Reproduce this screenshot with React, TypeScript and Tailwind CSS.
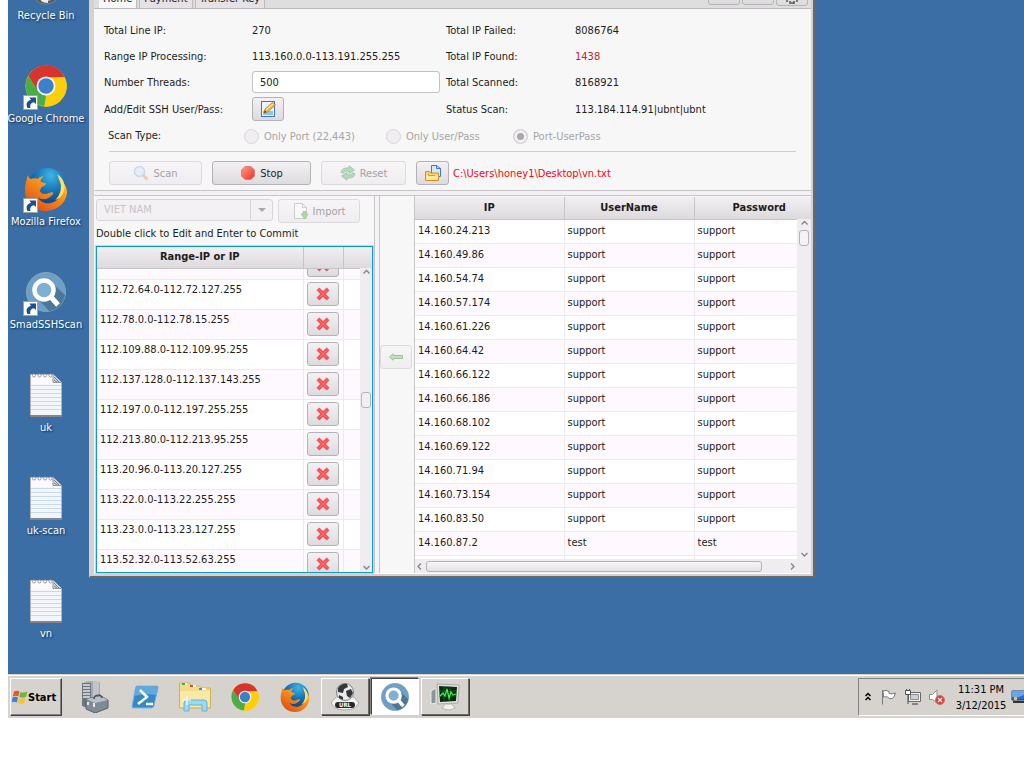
import React, { ReactNode, useState } from "react";

const ranges = [
  "112.72.64.0-112.72.127.255",
  "112.78.0.0-112.78.15.255",
  "112.109.88.0-112.109.95.255",
  "112.137.128.0-112.137.143.255",
  "112.197.0.0-112.197.255.255",
  "112.213.80.0-112.213.95.255",
  "113.20.96.0-113.20.127.255",
  "113.22.0.0-113.22.255.255",
  "113.23.0.0-113.23.127.255",
  "113.52.32.0-113.52.63.255",
];

const results = [
  ["14.160.24.213", "support", "support"],
  ["14.160.49.86", "support", "support"],
  ["14.160.54.74", "support", "support"],
  ["14.160.57.174", "support", "support"],
  ["14.160.61.226", "support", "support"],
  ["14.160.64.42", "support", "support"],
  ["14.160.66.122", "support", "support"],
  ["14.160.66.186", "support", "support"],
  ["14.160.68.102", "support", "support"],
  ["14.160.69.122", "support", "support"],
  ["14.160.71.94", "support", "support"],
  ["14.160.73.154", "support", "support"],
  ["14.160.83.50", "support", "support"],
  ["14.160.87.2", "test", "test"],
];

/* ---------- icons ---------- */

function Chrome({ className }: { className: string }) {
  return (
    <svg viewBox="0 0 48 48" className={className} aria-hidden="true">
      <circle cx="24" cy="24" r="23.5" fill="#fbcf0d" />
      <path d="M3.700 12.200A23.500 23.500 0 0 1 45.400 14H24L14 29Z" fill="#d9342b" />
      <path d="M3.700 12.200 14.600 29.500 24 35l-2 12A23.500 23.500 0 0 1 3.700 12.200Z" fill="#4aae48" />
      <path d="M21.500 47.400 33.500 29 34 14h11.400a23.500 23.500 0 0 1-23.900 33.400Z" fill="#fbcf0d" />
      <circle cx="24" cy="24" r="10.8" fill="#f4f6f8" />
      <circle cx="24" cy="24" r="8.8" fill="#3c7fcb" />
    </svg>
  );
}

function Firefox({ className }: { className: string }) {
  return (
    <svg viewBox="0 0 48 48" className={className} aria-hidden="true">
      <defs>
        <radialGradient id="ffGlobe" cx="0.6" cy="0.2" r="0.8">
          <stop offset="0" stopColor="#3fb4e8" />
          <stop offset="0.5" stopColor="#1673b8" />
          <stop offset="1" stopColor="#123a78" />
        </radialGradient>
        <linearGradient id="ffFox" x1="1" y1="0" x2="0.2" y2="1">
          <stop offset="0" stopColor="#ffe44d" />
          <stop offset="0.4" stopColor="#f8991d" />
          <stop offset="1" stopColor="#dc4b16" />
        </linearGradient>
      </defs>
      <circle cx="25" cy="22" r="21" fill="url(#ffGlobe)" />
      <path
        d="M4 9c1 2 2 3 3 4 3-1 6-1 8 0 2-2 4-3 6-3-2 2-3 4-3 6 2 1 5 1 6 2 0 2-3 3-5 4-1 2-1 3-2 4 2 4 6 4 9 3 2-1 4-2 6-1 0 2-3 4-6 6-4 2-8 1-11-1 3 5 9 8 15 6 8-2 12-9 11-18-1-4-3-7-4-11 6 5 10 12 10 18A23 23 0 0 1 24 48C11 48 1 38 1 25 1 19 3 14 4 9Z"
        fill="url(#ffFox)"
      />
      <path d="M36 8c3 5 5 10 4 17-1 5-3 8-6 11 8-3 11-10 10-17-1-5-4-9-8-11Z" fill="#ffe066" />
    </svg>
  );
}

function SmadScan({ className }: { className: string }) {
  return (
    <svg viewBox="0 0 40 40" className={className} aria-hidden="true">
      <circle cx="20" cy="20" r="19.5" fill="#6f9fc4" stroke="#7fa6bd" />
      <path d="M26 11 39 23a19 19 0 0 1-16 16L14 29Z" fill="#4d7796" />
      <circle cx="18" cy="18" r="9.5" fill="#7fb0d4" stroke="#fff" strokeWidth="4.5" />
      <path d="m25 25 7 8" stroke="#fff" strokeWidth="5" />
    </svg>
  );
}

function Notepad() {
  return (
    <svg viewBox="0 0 32 44" className="h-11 w-8" aria-hidden="true">
      <path d="M.5 1.5H23l8.500 8v34H.5Z" fill="#fbfaff" stroke="#b3b4bb" />
      <path d="M1 11h30v32H1Z" fill="#f3f5fb" />
      <path d="M1 12.500h30M1 16.500h30M1 20.500h30M1 24.500h30M1 28.500h30M1 32.500h30M1 36.500h30" stroke="#c5d9ec" />
      <path d="M0 43h32" stroke="#85868c" strokeWidth="2" />
      <path d="M23 1.500v8h8.500" fill="#dadbe0" stroke="#94959c" />
      <path d="m24 4 5 5M24 7l3 2" stroke="#77787e" />
      <g fill="#fff" stroke="#9a9ba2">
        <circle cx="4" cy="2.500" r="1.5" />
        <circle cx="9.500" cy="2.500" r="1.5" />
        <circle cx="15" cy="2.500" r="1.5" />
        <circle cx="20.500" cy="2.500" r="1.5" />
      </g>
    </svg>
  );
}

function RecycleBin() {
  return (
    <svg viewBox="0 0 32 44" className="h-11 w-8" aria-hidden="true">
      <path d="M2 2h28l-5 38q-9 6-18 0Z" fill="#c9cbcd" stroke="#8f9194" />
      <path d="M7 37q9 6 18 0v3q-9 6-18 0Z" fill="#5b5d60" />
      <path d="M11 35h7v7q-4 0-7-2Z" fill="#eceded" />
    </svg>
  );
}

function Shortcut() {
  return (
    <svg viewBox="0 0 15 15" className="absolute bottom-0 left-0 size-[15px]" aria-hidden="true">
      <rect x=".5" y=".5" width="14" height="14" fill="#fdfcf6" stroke="#a5a396" />
      <path d="M4.500 13C2.500 9 4 5.500 8 5L6.500 2.500H13V9l-2-1.800C8 7.500 6.500 10 7.500 13Z" fill="#1d4f95" />
    </svg>
  );
}

function EditIcon() {
  return (
    <svg viewBox="0 0 16 16" className="size-4" aria-hidden="true">
      <rect x="1.500" y=".5" width="13" height="15" fill="#eaf5ff" stroke="#3d76c8" />
      <path d="M3 10h10v4H3Z" fill="#8fc4f2" />
      <path d="m4 12 1-4 7.500-6.500 3 2.500-8 7Z" fill="#f3b43c" stroke="#b9761a" strokeWidth=".8" />
      <path d="m6 9 7-6" stroke="#ffe79a" strokeWidth="1.200" />
      <path d="m4 12 .8-2.500L6.500 11Z" fill="#4a3a2a" />
    </svg>
  );
}

function SearchIcon() {
  return (
    <svg viewBox="0 0 16 16" className="size-4 opacity-40" aria-hidden="true">
      <path d="m9.500 9.500 5 5" stroke="#e29a4d" strokeWidth="3" />
      <circle cx="6.500" cy="6.500" r="5" fill="#cfe8ff" stroke="#8ab4e0" strokeWidth="1.500" />
    </svg>
  );
}

function StopIcon() {
  return (
    <svg viewBox="0 0 16 16" className="size-4" aria-hidden="true">
      <defs>
        <linearGradient id="stopRed" x1="0" y1="0" x2="1" y2="1">
          <stop offset="0" stopColor="#ff9a86" />
          <stop offset="1" stopColor="#ef2f24" />
        </linearGradient>
      </defs>
      <path d="M5 1.500h6L14.500 5v6L11 14.500H5L1.500 11V5Z" fill="url(#stopRed)" stroke="#dd8078" />
    </svg>
  );
}

function ResetIcon() {
  return (
    <svg viewBox="0 0 16 16" className="size-4 opacity-50" aria-hidden="true">
      <path d="M1 7.500C1 4.500 4 2.500 9 3V.8L14.500 5 9 8.500V6.300C5 5.800 4 6.500 4 8Z" fill="#7cc47c" stroke="#3f9a50" strokeWidth=".8" />
      <path d="M15 8.500c0 3-3 5-8 4.500v2.200L1.500 11 7 7.500v2.200c4 .5 5-.2 5-1.700Z" fill="#7cc47c" stroke="#3f9a50" strokeWidth=".8" />
    </svg>
  );
}

function FolderIcon() {
  return (
    <svg viewBox="0 0 16 16" className="size-4" aria-hidden="true">
      <path d="M6.500.5h5l4 3v8h-9Z" fill="#d6e8fd" stroke="#4178cf" />
      <path d="M11.500.5v3h4" fill="none" stroke="#4178cf" />
      <path d="M.5 6.500h4l1 1.500h8v7.500H.5Z" fill="#fbd46c" stroke="#d98e1c" />
      <path d="M1 10.500h12v4.500H1Z" fill="#ffe9a0" />
      <path d="M3.500 8.500v2H10" fill="none" stroke="#e0992c" />
    </svg>
  );
}

function ImportIcon() {
  return (
    <svg viewBox="0 0 16 16" className="size-4 opacity-50" aria-hidden="true">
      <path d="M1.500.5h8l4 4v11h-12Z" fill="#fff" stroke="#a9a9ad" />
      <path d="M9.500.5v4h4" fill="none" stroke="#a9a9ad" />
      <path d="M10 8.500h3V11h2l-3.500 4.500L8 11h2Z" fill="#6fbf5f" stroke="#4a9a45" strokeWidth=".8" />
    </svg>
  );
}

function CrossIcon() {
  return (
    <svg viewBox="0 0 14 14" className="size-3.5" aria-hidden="true">
      <path
        d="M3.300 1 7 4.600 10.700 1 13 3.300 9.400 7l3.600 3.700-2.300 2.300L7 9.400 3.300 13 1 10.700 4.600 7 1 3.300Z"
        fill="#fb5155"
        stroke="#e2474c"
        strokeWidth=".8"
      />
      <path d="m3.500 3.500 7 7m0-7-7 7" stroke="#ff7a7c" strokeWidth=".8" />
    </svg>
  );
}

function Chevron({ dir, className = "" }: { dir: "up" | "down" | "left" | "right"; className?: string }) {
  const d = {
    up: "m1.500 5.500 3-3 3 3",
    down: "m1.500 3 3 3 3-3",
    left: "m6 1.500-3 3 3 3",
    right: "m3 1.500 3 3-3 3",
  }[dir];
  return (
    <svg viewBox="0 0 9 9" className={`size-[9px] ${className}`} aria-hidden="true">
      <path d={d} fill="none" stroke="#858385" strokeWidth="1.300" />
    </svg>
  );
}

/* ---------- controls ---------- */

function Btn({ children, className = "", disabled = false, label }: { children?: ReactNode; className?: string; disabled?: boolean; label?: string }) {
  return (
    <button
      type="button"
      disabled={disabled}
      aria-label={label}
      className={`flex h-6 shrink-0 items-center justify-center gap-1 rounded-[3px] border bg-linear-to-b ${
        disabled ? "border-[#dddadd] from-[#f8f5f8] to-[#f0edf0] text-[#a3a1a3]" : "border-[#b4b2b4] from-[#f3f1f3] to-[#dddbdd] text-[#1c1c1c]"
      } ${className}`}
    >
      {children}
    </button>
  );
}

function Caption({ children }: { children: ReactNode }) {
  return <span className="pt-0.5">{children}</span>;
}

function ScanType({ label, checked = false, className = "" }: { label: string; checked?: boolean; className?: string }) {
  return (
    <label className={`flex items-center gap-[5px] text-[#a6a4a6] ${className}`}>
      <input
        type="radio"
        name="scanType"
        disabled
        defaultChecked={checked}
        className="size-[15px] shrink-0 appearance-none rounded-full border border-[#d8d5d8] bg-[#f1eef1] checked:bg-[#a9a9a9] checked:shadow-[inset_0_0_0_3px_#f3f1f3]"
      />
      <Caption>{label}</Caption>
    </label>
  );
}

function DesktopItem({ label, children, shortcut = false }: { label: string; children: ReactNode; shortcut?: boolean }) {
  return (
    <a href="#" className="flex h-[103px] flex-col items-center justify-end">
      <span className="relative flex h-12 w-[46px] items-center justify-center">
        {children}
        {shortcut && <Shortcut />}
      </span>
      <span className="mt-px text-[11px] leading-4 whitespace-nowrap text-white [text-shadow:1px_1px_2px_#0b2648]">{label}</span>
    </a>
  );
}

function TaskButton({ label, children, state = "flat" }: { label: string; children: ReactNode; state?: "flat" | "raised" | "active" }) {
  const looks = {
    flat: "border-transparent",
    raised: "border-t-white border-l-white border-r-[#6b6963] border-b-[#6b6963] shadow-[1px_1px_0_#404040]",
    active: "border-t-[#404040] border-l-[#404040] border-r-white border-b-white bg-white shadow-[-1px_-1px_0_#848284]",
  }[state];
  return (
    <button type="button" aria-label={label} className={`flex h-[37px] w-12 shrink-0 items-center justify-center border ${looks}`}>
      {children}
    </button>
  );
}

/* ---------- window ---------- */

function Field({ label, value, valueClass = "" }: { label: string; value: string; valueClass?: string }) {
  return (
    <>
      <Caption>{label}</Caption>
      <span className={`pt-0.5 ${valueClass}`}>{value}</span>
    </>
  );
}

function RangeTable() {
  const th = "h-[21px] border-b border-[#c8c5c8] bg-linear-to-b from-[#f1eff1] to-[#dcdadc] p-0 font-bold";
  return (
    <div className="relative h-[327px] overflow-hidden border border-[#0f9bcb] bg-white shadow-[0_0_0_1px_#b5dceb]">
      <table className="w-full table-fixed border-collapse">
        <thead>
          <tr>
            <th className={`${th} w-[206px] border-r`}>Range-IP or IP</th>
            <th className={`${th} w-10 border-r`} aria-label="Delete" />
            <th className={th} aria-label="Scroll" />
          </tr>
        </thead>
        <tbody>
          <tr className="border-b border-[#eceaec] bg-[#fef9fe]">
            <td className="h-[11px] border-r border-[#eceaec] p-0" />
            <td className="border-r border-[#eceaec] p-0">
              <div className="flex h-2.5 items-end justify-center overflow-hidden pb-0.5">
                <Btn className="w-8" label="Delete previous range">
                  <CrossIcon />
                </Btn>
              </div>
            </td>
            <td />
          </tr>
          {ranges.map((r, i) => (
            <tr key={r} className={`border-b border-[#eceaec] ${i % 2 ? "bg-[#fef9fe]" : "bg-white"}`}>
              <td className="h-[30px] border-r border-[#eceaec] p-0 pt-0.5 pl-[3px] align-top">{r}</td>
              <td className="border-r border-[#eceaec] p-0">
                <div className="flex justify-center">
                  <Btn className="w-8" label={`Delete ${r}`}>
                    <CrossIcon />
                  </Btn>
                </div>
              </td>
              <td />
            </tr>
          ))}
        </tbody>
      </table>
      <div className="absolute top-[21px] right-0 bottom-0 flex w-3 flex-col items-center justify-between bg-[#efedef]">
        <Chevron dir="up" />
        <div className="mt-16 h-4 w-2.5 rounded-[3px] border border-[#b4b2b4] bg-[#f1eff1]" />
        <Chevron dir="down" className="mt-26" />
      </div>
    </div>
  );
}

function ResultTable() {
  const th = "h-[22px] border-b border-[#c8c5c8] bg-linear-to-b from-[#f1eff1] to-[#dcdadc] p-0 font-bold";
  const td = "h-6 border-r border-[#eceaec] p-0 pl-[3px]";
  return (
    <div className="flex min-w-0 flex-1 flex-col border-l border-[#c8c5c8] pt-px">
      <div className="relative h-[362px] overflow-hidden bg-white">
        <table className="w-[409px] table-fixed border-collapse">
          <thead>
            <tr>
              <th className={`${th} w-[149px] border-r`}>IP</th>
              <th className={`${th} w-[130px] border-r`}>UserName</th>
              <th className={`${th} w-[130px]`}>Password</th>
            </tr>
          </thead>
          <tbody>
            {results.map(([ip, user, pass], i) => (
              <tr key={ip} className={`border-b border-[#eceaec] ${i % 2 ? "bg-[#fef9fe]" : "bg-white"}`}>
                <td className={td}>{ip}</td>
                <td className={td}>{user}</td>
                <td className={td}>{pass}</td>
              </tr>
            ))}
            <tr>
              <td className={td} />
              <td className={td} />
              <td className={td} />
            </tr>
          </tbody>
        </table>
        <div className="absolute top-[22px] right-0 bottom-0 flex w-3.5 flex-col items-center bg-[#efedef]">
          <Chevron dir="up" />
          <div className="mt-0.5 h-4 w-2.5 rounded-[3px] border border-[#b4b2b4] bg-[#f4f2f4]" />
          <Chevron dir="down" className="mt-auto" />
        </div>
      </div>
      <div className="flex h-3.5 items-center bg-[#efedef] pr-3.5">
        <Chevron dir="left" />
        <div className="ml-0.5 h-[11px] w-[336px] rounded-[3px] border border-[#b4b2b4] bg-linear-to-b from-[#f8f6f8] to-[#e4e2e4]" />
        <Chevron dir="right" className="ml-auto" />
      </div>
    </div>
  );
}

function ScannerWindow() {
  const [threads, setThreads] = useState("500");
  const grid = "grid grid-cols-[148px_194px_129px_1fr] items-center";
  const tab = "h-5 border-[#bcbabc] px-1 pt-[3px]";
  return (
    <section
      aria-label="Scanner"
      className="absolute top-0 left-[81px] w-[726px] border-r-2 border-b-2 border-l border-r-[#6b6964] border-b-[#6b6964] border-l-[#d6d3ce] text-[11px] leading-4 text-[#1c1c1c]"
    >
      <div className="border-r-2 border-b-2 border-l-4 border-[#d4d1d0]">
        <div className="bg-[#f7f7f7]">
          <div className="flex h-[9px] items-end overflow-hidden border-b border-[#bcbabc] bg-[#dfdedf] pr-[3px] pl-[5px]">
            <nav className="flex items-end gap-0.5">
              <a href="#home" className={`${tab} border-r bg-[#f7f7f7]`}>Home</a>
              <a href="#payment" className={`${tab} border-x bg-[#e4e2e4]`}>Payment</a>
              <a href="#key" className={`${tab} border-x bg-[#e4e2e4]`}>Transfer Key</a>
            </nav>
            <div className="ml-auto flex items-end gap-0.5">
              <Btn className="mb-[3px] w-8" label="Minimize" />
              <Btn className="mb-[3px] w-8" label="Maximize" />
              <Btn className="mb-0.5 w-8" label="Close">
                <svg viewBox="0 0 12 6" className="mt-4 h-1.5 w-3" aria-hidden="true">
                  <path d="M1 0v3m3-1v3m4-3v3m3-5v3M5 4h3" stroke="#555" strokeWidth="1.500" />
                </svg>
              </Btn>
            </div>
          </div>

          <div className="px-2.5 pt-2">
            <div className={`${grid} h-[26px]`}>
              <Field label="Total Line IP:" value="270" />
              <Field label="Total IP Failed:" value="8086764" />
            </div>
            <div className={`${grid} h-[26px]`}>
              <Field label="Range IP Processing:" value="113.160.0.0-113.191.255.255" />
              <Field label="Total IP Found:" value="1438" valueClass="text-[#c4242c]" />
            </div>
            <div className={`${grid} h-[26px]`}>
              <label htmlFor="threads" className="pt-0.5">Number Threads:</label>
              <input
                id="threads"
                value={threads}
                onChange={(e) => setThreads(e.target.value)}
                className="h-[22px] w-[188px] rounded-[3px] border border-[#c3c1c3] bg-white px-[7px] outline-none"
              />
              <Field label="Total Scanned:" value="8168921" />
            </div>
            <div className={`${grid} h-7`}>
              <Caption>Add/Edit SSH User/Pass:</Caption>
              <Btn className="w-8" label="Add or edit SSH user and password">
                <EditIcon />
              </Btn>
              <Field label="Status Scan:" value="113.184.114.91|ubnt|ubnt" />
            </div>
            <fieldset className="flex h-[26px] items-center pl-1">
              <span className="w-[136px]">Scan Type:</span>
              <ScanType label="Only Port (22,443)" className="w-[142px]" />
              <ScanType label="Only User/Pass" className="w-[127px]" />
              <ScanType label="Port-UserPass" checked />
            </fieldset>
          </div>

          <div className="mx-[15px] mt-0.5 flex h-[39px] items-start gap-2.5 border-t border-[#d0ced0] pt-[9px]">
            <Btn disabled className="w-[93px]">
              <SearchIcon />
              <Caption>Scan</Caption>
            </Btn>
            <Btn className="w-[99px]">
              <StopIcon />
              <Caption>Stop</Caption>
            </Btn>
            <Btn disabled className="w-[85px]">
              <ResetIcon />
              <Caption>Reset</Caption>
            </Btn>
            <div className="flex items-center gap-1">
              <Btn className="w-[33px]" label="Choose output file">
                <FolderIcon />
              </Btn>
              <span className="pt-0.5 whitespace-nowrap text-[#f8060c]">C:\Users\honey1\Desktop\vn.txt</span>
            </div>
          </div>

          <div className="h-1.5 border-y border-[#c8c5c8] bg-[#f3f1f3]" />

          <div className="flex border-b border-white">
            <div className="w-[280px] shrink-0 pt-[3px] pr-px pl-0.5">
              <div className="flex gap-[5px]">
                <div className="relative h-[22px] w-[177px]">
                  <select aria-label="Country" disabled className="h-full w-full appearance-none rounded-[3px] border border-[#d8d5d8] bg-[#f3f1f3] px-[7px] text-[#c6c4c6] opacity-100">
                    <option>VIET NAM</option>
                  </select>
                  <span className="pointer-events-none absolute inset-y-px right-px flex w-[22px] items-center justify-center border-l border-[#d8d5d8]">
                    <svg viewBox="0 0 8 4" className="h-1 w-2" aria-hidden="true">
                      <path d="M0 0h8L4 4Z" fill="#a9a7a9" />
                    </svg>
                  </span>
                </div>
                <Btn disabled className="w-[82px]">
                  <ImportIcon />
                  <Caption>Import</Caption>
                </Btn>
              </div>
              <p className="mt-[3px] mb-1 whitespace-nowrap">Double click to Edit and Enter to Commit</p>
              <RangeTable />
            </div>
            <div className="w-1.5 shrink-0 border-x border-[#c8c5c8] bg-[#f5f3f5]" />
            <div className="flex w-[34px] shrink-0 items-start pt-[149px]">
              <Btn disabled className="w-8" label="Send to range list">
                <svg viewBox="0 0 14 8" className="h-2 w-3.5" aria-hidden="true">
                  <path d="M.5 4 4 .8V2.500h9.500v3H4v1.700Z" fill="#c5e3c0" stroke="#98c496" />
                </svg>
              </Btn>
            </div>
            <ResultTable />
          </div>
        </div>
      </div>
    </section>
  );
}

/* ---------- taskbar ---------- */

function Taskbar() {
  return (
    <footer className="flex h-11 items-start border-t border-[#d6d3ce] bg-[#d6d3ce] text-[11px] text-black">
      <div className="flex w-full items-start border-t border-white pt-0.5 pl-0.5">
        <button
          type="button"
          className="flex h-[38px] w-[52px] shrink-0 items-center border border-t-white border-r-[#404040] border-b-[#404040] border-l-white pl-px font-bold shadow-[inset_-1px_-1px_0_#848284]"
        >
          <svg viewBox="0 0 16 16" className="size-4 shrink-0" aria-hidden="true">
            <path d="M2 2.500Q5 .8 7.500 2.500L6.300 7.500Q4 6 .8 7.500Z" fill="#e8552a" />
            <path d="M8.500 3Q11 4.500 15.500 2.500L14 7.800Q10.500 9.500 7.300 8Z" fill="#73b43a" />
            <path d="M.6 8.500Q3.500 7 6 8.700L4.800 13.500Q2.500 12-.2 13.300Z" fill="#3f7fd0" />
            <path d="M7 9.200Q10 10.500 13.600 8.800L12.300 14Q9 15.500 5.800 14Z" fill="#f8c42c" />
          </svg>
          <Caption>Start</Caption>
        </button>
        <div className="ml-[9px] flex gap-0.5">
          <TaskButton label="Server Manager">
            <svg viewBox="0 0 28 32" className="h-8 w-7" aria-hidden="true">
              <path d="M1 2 8 0l11 1v24l-8 3-9-2Z" fill="#a3a9ae" />
              <path d="M1 2h9v25l-9-2Z" fill="#6f767c" />
              <path d="M2 4h7M2 7h7M2 10h7M2 13h7M2 16h7" stroke="#e1e5e8" strokeWidth="1.500" />
              <path d="M12 1h6v16h-6Z" fill="#bfc5c9" />
              <path d="M5 18 20 15l7 4v8l-13 5-9-4Z" fill="#7f8c97" stroke="#56606a" />
              <path d="m5 18 9 4 13-3-7-4Z" fill="#b6c0c8" />
              <path d="M13 18c0-5 8-5 8-1" fill="none" stroke="#444d55" strokeWidth="1.500" />
              <path d="M13 22v4m-6-5v3" stroke="#e4e8eb" strokeWidth="2" />
            </svg>
          </TaskButton>
          <TaskButton label="PowerShell">
            <svg viewBox="0 0 28 24" className="h-6 w-7" aria-hidden="true">
              <path d="M6 1h20q1.500 0 1 2l-4 18q-.5 2-2.500 2H2q-1.500 0-1-2L4.500 3Q5 1 6 1Z" fill="#3689c9" stroke="#7fb9e3" />
              <path d="M6 1h20q1.500 0 1 2l-1.500 7Q14 8 3 11L4.500 3Q5 1 6 1Z" fill="#62a9dc" />
              <path d="m9 5 7 7-9 7M15 19h7" fill="none" stroke="#fff" strokeWidth="2.500" />
            </svg>
          </TaskButton>
          <TaskButton label="Windows Explorer">
            <svg viewBox="0 0 34 30" className="h-[30px] w-[34px]" aria-hidden="true">
              <path d="M1.500 26V2q0-1 1-1h9l2 3h8l2 2h8q1 0 1 1v19Z" fill="#f4dc87" stroke="#d3b153" />
              <path d="M4 2h5M13 4h5M22 7h6" stroke="#fffbe8" strokeWidth="2" />
              <path d="M4 2h3" stroke="#38b33c" strokeWidth="2" />
              <path d="M12 4h3" stroke="#d84a3a" strokeWidth="2" />
              <path d="M21 7h3" stroke="#3b8bdc" strokeWidth="2" />
              <path d="M2 9h30v16H2Z" fill="#f9e9a6" />
              <path d="M6 29V21q0-3 3-3h17q3 0 3 3v8h-5v-6H11v6Z" fill="#9bd8f1" stroke="#5fb3d9" />
              <path d="M9 14v9M5 18h8" stroke="#fff" />
            </svg>
          </TaskButton>
          <TaskButton label="Google Chrome">
            <Chrome className="size-7" />
          </TaskButton>
          <TaskButton label="Mozilla Firefox">
            <Firefox className="size-[30px]" />
          </TaskButton>
          <TaskButton label="URL tool" state="raised">
            <svg viewBox="0 0 30 28" className="h-7 w-[30px]" aria-hidden="true">
              <path d="M1 20 6 14h18l5 6-4 5q-10 4-20 0Z" fill="#f0f1f1" stroke="#a9aaab" />
              <circle cx="15" cy="9" r="8.500" fill="#e8eaec" stroke="#7d8083" />
              <path d="M8 5q4-5 9-4l1 3-4 2-1 4-5-1ZM16 8l5-2 2 4-3 5-3-2ZM9 12l4 2v3l-4-2Z" fill="#34383b" />
              <rect x="5" y="19" width="20" height="6" rx="3" fill="#25282a" />
              <text x="15" y="24" textAnchor="middle" fontSize="6" fontWeight="700" fill="#fff">URL</text>
            </svg>
          </TaskButton>
          <TaskButton label="SmadSSHScan" state="active">
            <SmadScan className="size-7" />
          </TaskButton>
          <TaskButton label="Task Manager" state="raised">
            <svg viewBox="0 0 30 28" className="h-7 w-[30px]" aria-hidden="true">
              <path d="M1 8 6 5v15l-5 1Z" fill="#8d949a" stroke="#e8eaec" />
              <path d="M7 1 29 2l-1 18-20 1Z" fill="#e4e4de" stroke="#a8a8a2" />
              <path d="M9 3l18 1-1 14-16 1Z" fill="#0c2a12" />
              <path d="M9 8h17M9 13h17M14 3v15M20 3v15" stroke="#1c6a2a" strokeWidth=".7" />
              <path d="m10 13 3-3 2 3 2-7 2 9 2-6 2 3 3-1" fill="none" stroke="#3bf04a" strokeWidth="1.300" />
              <path d="M15 21h7l3 4q-6 4-13 0Z" fill="#f1f1ee" stroke="#b2b2ac" />
            </svg>
          </TaskButton>
        </div>
        <div className="ml-auto flex h-[38px] w-[166px] shrink-0 items-center overflow-hidden border border-r-0 border-[#848284] border-b-white pl-1.5">
          <svg viewBox="0 0 6 10" className="h-2.5 w-1.5 shrink-0" aria-hidden="true">
            <path d="m.5 4 2.500-2.500L5.500 4m-5 4L3 5.500 5.500 8" fill="none" stroke="#000" strokeWidth="1.500" />
          </svg>
          <svg viewBox="0 0 16 16" className="ml-2.5 size-4 shrink-0" aria-hidden="true">
            <path d="M1.500 1v14.500M2 2q3-1.500 6 .5v2q3 1 6.500-.5-1 3.500-3 5.500-3 1-5-1.500-2-.5-4 0Z" fill="#fff" stroke="#77787a" />
          </svg>
          <svg viewBox="0 0 16 16" className="ml-2 size-4 shrink-0" aria-hidden="true">
            <path d="M3.500 3.500h12v9h-12Z" fill="#f2f4f5" stroke="#66696c" />
            <path d="M5.500 5.500h8v5h-8Z" fill="#cdd1d5" stroke="#8b8e91" />
            <path d="M7 15h6" stroke="#66696c" strokeWidth="1.500" />
            <path d="M.5 1.500h5v4h-5ZM1.500 0v2M4.500 0v2M3 6v9" fill="#fff" stroke="#4c4e50" />
          </svg>
          <svg viewBox="0 0 16 16" className="ml-2 size-4 shrink-0" aria-hidden="true">
            <path d="M.5 5.500h3L8 1v13L3.500 10.500h-3Z" fill="#fff" stroke="#8a8b8d" />
            <circle cx="11" cy="11" r="4.500" fill="#e03a36" stroke="#d56b67" />
            <path d="m9 9 4 4m0-4-4 4" stroke="#fff" strokeWidth="1.300" />
          </svg>
          <time className="ml-2.5 w-[52px] shrink-0 pt-0.5 text-center leading-4 whitespace-nowrap">
            11:31 PM
            <br />
            3/12/2015
          </time>
          <svg viewBox="0 0 22 14" className="ml-1 h-3.5 w-[22px] shrink-0" aria-hidden="true">
            <path d="M1 1h20v9H1Z" fill="#2d6fc4" stroke="#173d78" />
            <path d="M1 1h20L8 7H1Z" fill="#6ba6e4" />
            <path d="M3 7h3v3H3Z" fill="#f3c53b" />
            <path d="M2 12h18" stroke="#333" strokeWidth="2" />
          </svg>
        </div>
      </div>
    </footer>
  );
}

export default function App() {
  return (
    <main className="bg-white pl-2 font-['DejaVu_Sans_Condensed','DejaVu_Sans',sans-serif]">
      <div className="relative overflow-hidden bg-[#3a6ea5]">
        <div className="-mt-[79px] flex w-[76px] flex-col pb-8">
          <DesktopItem label="Recycle Bin">
            <RecycleBin />
          </DesktopItem>
          <DesktopItem label="Google Chrome" shortcut>
            <Chrome className="size-[42px]" />
          </DesktopItem>
          <DesktopItem label="Mozilla Firefox" shortcut>
            <Firefox className="size-11" />
          </DesktopItem>
          <DesktopItem label="SmadSSHScan" shortcut>
            <SmadScan className="size-10" />
          </DesktopItem>
          <DesktopItem label="uk">
            <Notepad />
          </DesktopItem>
          <DesktopItem label="uk-scan">
            <Notepad />
          </DesktopItem>
          <DesktopItem label="vn">
            <Notepad />
          </DesktopItem>
        </div>
        <ScannerWindow />
      </div>
      <Taskbar />
    </main>
  );
}
